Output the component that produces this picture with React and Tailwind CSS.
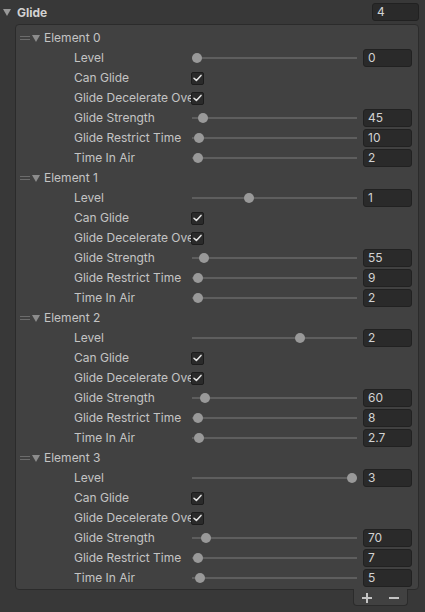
import React from "react";

const elements = [
  { level: 0, strength: 45, restrict: 10, air: 2 },
  { level: 1, strength: 55, restrict: 9, air: 2 },
  { level: 2, strength: 60, restrict: 8, air: 2.7 },
  { level: 3, strength: 70, restrict: 7, air: 5 },
];

function Field({ value, wide }) {
  return (
    <div
      className={`${wide ? "w-[47px]" : "w-[49px]"} h-[18px] rounded-[3px] bg-[#2a2a2a] border border-[#212121] flex items-center pl-[4px] text-[#d2d2d2] leading-none`}
    >
      {value}
    </div>
  );
}

function Triangle({ color }) {
  return (
    <svg width="8" height="7" viewBox="0 0 8 7" className="shrink-0">
      <polygon points="0,0 8,0 4,7" fill={color} />
    </svg>
  );
}

function Label({ children }) {
  return (
    <div className="w-[117px] ml-[58px] overflow-hidden whitespace-nowrap shrink-0">
      {children}
    </div>
  );
}

function SliderRow({ label, value, max }) {
  const frac = Math.min(1, value / max);
  return (
    <div className="h-5 flex items-center">
      <Label>{label}</Label>
      <div className="relative w-[165px] h-[10px] ml-[1px] mr-[6px] flex items-center">
        <div className="w-full h-[2px] bg-[#5e5e5e]" />
        <div
          className="absolute top-0 w-[10px] h-[10px] rounded-full bg-[#999999]"
          style={{ left: `${frac * 155}px` }}
        />
      </div>
      <Field value={value} />
    </div>
  );
}

function CheckRow({ label }) {
  return (
    <div className="h-5 flex items-center">
      <Label>{label}</Label>
      <div className="w-[13px] h-[13px] rounded-[2px] bg-[#2a2a2a] border border-[#1c1c1c] flex items-center justify-center">
        <svg width="9" height="8" viewBox="0 0 9 8">
          <polyline
            points="1,4.2 3.4,6.4 8,1.4"
            fill="none"
            stroke="#e4e4e4"
            strokeWidth="1.5"
            strokeLinecap="round"
            strokeLinejoin="round"
          />
        </svg>
      </div>
    </div>
  );
}

function ElementBlock({ index, data }) {
  return (
    <div>
      <div className="h-5 flex items-center pl-[4px]">
        <div className="w-[10px] h-[4px] flex flex-col justify-between mr-[2px]">
          <div className="h-px bg-[#6c6c6c]" />
          <div className="h-px bg-[#6c6c6c]" />
        </div>
        <Triangle color="#8c8c8c" />
        <span className="ml-[4px]">Element {index}</span>
      </div>
      <SliderRow label="Level" value={data.level} max={3} />
      <CheckRow label="Can Glide" />
      <CheckRow label="Glide Decelerate Over Time" />
      <SliderRow label="Glide Strength" value={data.strength} max={1200} />
      <SliderRow label="Glide Restrict Time" value={data.restrict} max={1000} />
      <SliderRow label="Time In Air" value={data.air} max={250} />
    </div>
  );
}

export default function App() {
  return (
    <div className="w-[425px] h-[612px] bg-[#383838] font-['Inter',sans-serif] text-[12px] text-[#c4c4c4] overflow-hidden">
      <div className="h-[24px] flex items-center pl-[3px] pr-[6px]">
        <Triangle color="#999999" />
        <span className="ml-[6px] font-bold text-[#d2d2d2] pt-[2px]">Glide</span>
        <div className="ml-auto">
          <Field value={4} wide />
        </div>
      </div>
      <div className="ml-[15px] mr-[6px] bg-[#414141] border border-[#2b2b2b] rounded-[4px] pt-[3px] pb-[1px]">
        {elements.map((d, i) => (
          <ElementBlock key={i} index={i} data={d} />
        ))}
      </div>
      <div className="flex justify-end mr-[17px]">
        <div className="w-[55px] h-[17px] -mt-px bg-[#414141] border border-t-0 border-[#2b2b2b] rounded-b-[4px] flex items-center justify-between px-[8px] pt-[2px]">
          <svg width="10" height="10" viewBox="0 0 10 10">
            <rect x="0" y="4" width="10" height="2" fill="#c4c4c4" />
            <rect x="4" y="0" width="2" height="10" fill="#c4c4c4" />
          </svg>
          <svg width="10" height="10" viewBox="0 0 10 10">
            <rect x="0" y="4" width="10" height="2" fill="#c4c4c4" />
          </svg>
        </div>
      </div>
    </div>
  );
}
